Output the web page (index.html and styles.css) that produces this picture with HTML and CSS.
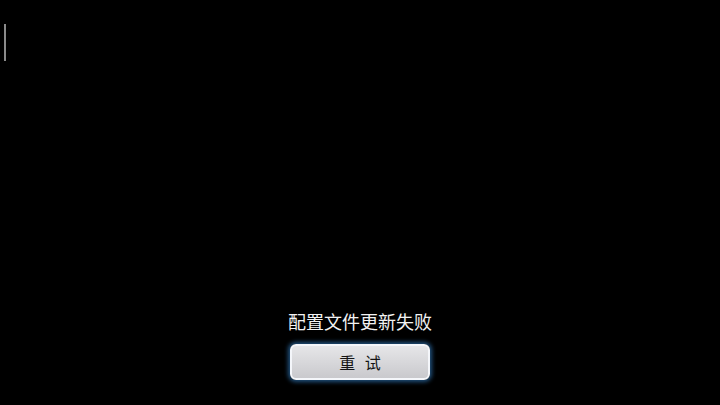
FILE: index.html
```html
<!DOCTYPE html>
<html lang="zh-CN">
<head>
    <meta charset="UTF-8">
    <meta name="viewport" content="width=device-width, initial-scale=1.0">
    <title>配置文件更新失败</title>
    <link rel="stylesheet" href="styles.css">
</head>
<body>
    <div class="scroll-mark"></div>

    <div class="message">
        <p class="message-text">配置文件更新失败</p>
        <button class="retry-button" type="button">重 试</button>
    </div>
</body>
</html>
```

FILE: styles.css
```css
/* General Styling */
body {
    margin: 0;
    padding: 0;
    width: 720px;
    height: 405px;
    background: #000000;
    color: #ffffff;
    font-family: 'Noto Sans CJK SC', 'Noto Sans', sans-serif;
    display: flex;
    flex-direction: column;
    justify-content: flex-end;
    align-items: center;
    overflow: hidden;
    position: relative;
}

/* Thin marker on the left edge */
.scroll-mark {
    position: absolute;
    left: 4px;
    top: 24px;
    width: 2px;
    height: 37px;
    background: #8a8a8a;
}

/* Message Section */
.message {
    display: flex;
    flex-direction: column;
    align-items: center;
    margin-bottom: 25px;
}

.message-text {
    margin: 0 0 11px 0;
    font-size: 18px;
    line-height: 24px;
    color: #f2f2f2;
}

.retry-button {
    width: 140px;
    height: 36px;
    border: 2px solid #f4f6fa;
    border-radius: 6px;
    background: linear-gradient(to bottom, #e6e6e8, #c9c9cd);
    color: #141414;
    font-family: 'Noto Sans CJK SC', 'Noto Sans', sans-serif;
    font-size: 16px;
    letter-spacing: 3px;
    padding: 0 0 0 3px;
    box-shadow: 0 0 4px 2px rgba(60, 150, 230, 0.55);
    cursor: pointer;
}
```
